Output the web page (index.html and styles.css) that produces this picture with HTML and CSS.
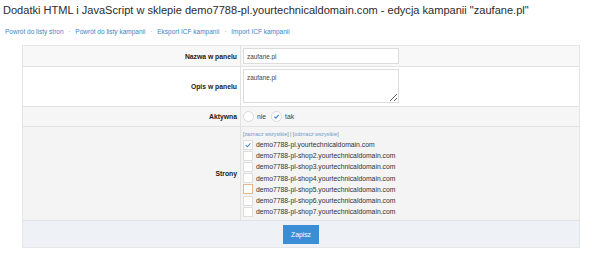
FILE: index.html
```html
<!DOCTYPE html>
<html lang="pl">
<head>
    <meta charset="UTF-8">
    <title>Edycja kampanii</title>
    <link rel="stylesheet" href="styles.css">
</head>
<body>
    <h1 class="page-title">Dodatki HTML i JavaScript w sklepie demo7788-pl.yourtechnicaldomain.com - edycja kampanii "zaufane.pl"</h1>

    <div class="crumbs">
        <a href="#">Powrót do listy stron</a>
        <span class="sep">·</span>
        <a href="#">Powrót do listy kampanii</a>
        <span class="sep">·</span>
        <a href="#">Eksport ICF kampanii</a>
        <span class="sep">·</span>
        <a href="#">Import ICF kampanii</a>
    </div>

    <form class="edit-form">
        <table class="form-table">
            <tr class="row-name">
                <th>Nazwa w panelu</th>
                <td><input type="text" class="field" value="zaufane.pl"></td>
            </tr>
            <tr class="row-desc">
                <th>Opis w panelu</th>
                <td><textarea class="field area">zaufane.pl</textarea></td>
            </tr>
            <tr class="row-active">
                <th>Aktywna</th>
                <td>
                    <div class="radios">
                        <label class="opt"><span class="radio"></span>nie</label>
                        <label class="opt"><span class="radio on"><svg viewBox="0 0 10 10"><path d="M2.6 5.2 L4.3 6.8 L7.4 3.3" /></svg></span>tak</label>
                    </div>
                </td>
            </tr>
            <tr class="row-shops">
                <th>Strony</th>
                <td>
                    <div class="toggle-all">[<a href="#">zaznacz wszystkie</a>] | [<a href="#">odznacz wszystkie</a>]</div>
                    <ul class="shops">
                        <li><span class="box on"><svg viewBox="0 0 10 10"><path d="M2.2 5.2 L4.2 7.2 L8 2.8" /></svg></span>demo7788-pl.yourtechnicaldomain.com</li>
                        <li><span class="box"></span>demo7788-pl-shop2.yourtechnicaldomain.com</li>
                        <li><span class="box"></span>demo7788-pl-shop3.yourtechnicaldomain.com</li>
                        <li><span class="box"></span>demo7788-pl-shop4.yourtechnicaldomain.com</li>
                        <li><span class="box hover"></span>demo7788-pl-shop5.yourtechnicaldomain.com</li>
                        <li><span class="box"></span>demo7788-pl-shop6.yourtechnicaldomain.com</li>
                        <li><span class="box"></span>demo7788-pl-shop7.yourtechnicaldomain.com</li>
                    </ul>
                </td>
            </tr>
            <tr class="row-submit">
                <td colspan="2"><button type="submit" class="save">Zapisz</button></td>
            </tr>
        </table>
    </form>
</body>
</html>
```

FILE: styles.css
```css
body {
    font-family: "Liberation Sans", Arial, sans-serif;
    margin: 0;
    padding: 0;
    background-color: #ffffff;
    color: #333333;
}
.page-title {
    margin: 0;
    padding: 3px 3px 0;
    font-size: 11.05px;
    font-weight: normal;
    line-height: 15px;
    color: #2b2b2b;
}
.crumbs {
    padding: 9px 5px 0;
    font-size: 6.5px;
    line-height: 10px;
    color: #8aa8c4;
}
.crumbs a {
    color: #3f86c4;
    text-decoration: none;
}
.crumbs .sep {
    margin: 0 3px;
}
.edit-form {
    padding: 8px 0 0 22px;
}
.form-table {
    width: 558px;
    border-collapse: collapse;
    border: 1px solid #e6e6e6;
    font-size: 6.8px;
}
.form-table th {
    width: 214px;
    padding: 0 3px 0 0;
    text-align: right;
    font-weight: bold;
    color: #222222;
    border-right: 1px solid #e2e2e2;
    border-bottom: 1px solid #e2e2e2;
}
.form-table td {
    padding: 0 2px;
    border-bottom: 1px solid #e2e2e2;
    vertical-align: top;
}
.row-name {
    height: 21px;
    background-color: #f8f8f8;
}
.row-name td {
    padding-top: 2px;
}
.row-desc {
    height: 40px;
    background-color: #ffffff;
}
.row-desc td {
    padding-top: 2px;
}
.row-active {
    height: 20px;
    background-color: #f6f6f6;
}
.row-shops {
    height: 94px;
    background-color: #f4f4f4;
}
.row-shops td {
    padding-top: 3px;
}
.row-submit {
    height: 27px;
    background-color: #eef2f6;
}
.row-submit td {
    text-align: center;
    vertical-align: middle;
    border-bottom: none;
}
.field {
    display: block;
    box-sizing: border-box;
    width: 156px;
    height: 16px;
    margin: 0;
    padding: 0 3px;
    border: 1px solid #dcdcdc;
    background: #ffffff;
    font-family: inherit;
    font-size: 6.4px;
    color: #444444;
    outline: none;
}
.area {
    height: 34px;
    padding-top: 4px;
    resize: vertical;
}
.radios {
    display: flex;
    align-items: center;
    gap: 5px;
    height: 19px;
}
.opt {
    display: flex;
    align-items: center;
    gap: 3px;
    color: #444444;
}
.radio {
    width: 9px;
    height: 9px;
    border: 1px solid #dadada;
    border-radius: 50%;
    background: #ffffff;
    display: flex;
}
.radio svg, .box svg {
    width: 100%;
    height: 100%;
}
.radio path, .box path {
    fill: none;
    stroke: #3b8ad4;
    stroke-width: 1.3;
}
.toggle-all {
    font-size: 5.2px;
    line-height: 8px;
    color: #777777;
}
.toggle-all a {
    color: #6b9cc8;
    text-decoration: none;
}
.shops {
    list-style: none;
    margin: 1px 0 0;
    padding: 0;
}
.shops li {
    display: flex;
    align-items: center;
    gap: 3px;
    height: 11.2px;
    color: #333333;
}
.box {
    display: flex;
    width: 8px;
    height: 8px;
    border: 1px solid #dedede;
    background: #ffffff;
}
.box.hover {
    border-color: #e9b58b;
}
.save {
    width: 36px;
    height: 19px;
    padding: 0;
    border: none;
    background-color: #3a8ed6;
    color: #ffffff;
    font-family: inherit;
    font-size: 6.8px;
    cursor: pointer;
}
```
